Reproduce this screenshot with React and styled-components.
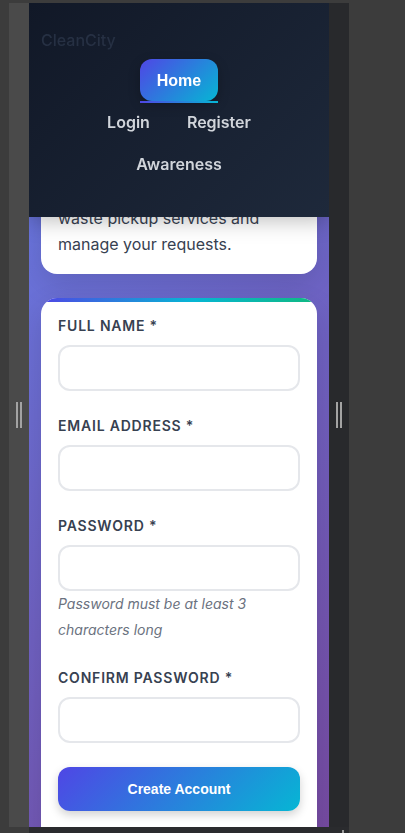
import React, { useLayoutEffect, useRef } from "react";
import styled, { createGlobalStyle } from "styled-components";

const Global = createGlobalStyle`
  html, body { margin: 0; padding: 0; background: #3c3c3c; }
  body { font-family: "Inter", "Noto Sans", sans-serif; }
  * { box-sizing: border-box; }
`;

const Screen = styled.div`
  width: 405px;
  height: 833px;
  overflow: hidden;
  background: #3c3c3c;
  padding: 3px 0 0 9px;
  display: flex;
  align-items: flex-start;
`;

const Rail = styled.div`
  width: 20px;
  height: 824px;
  flex: none;
  background: ${(p) => (p.$dark ? "#28292c" : "#4a4a4a")};
  display: flex;
  align-items: center;
  justify-content: center;
  gap: 2px;
`;

const Grip = styled.span`
  width: 2px;
  height: 26px;
  background: #a3a3a3;
`;

const Column = styled.div`
  width: 320px;
  display: flex;
  flex-direction: column;
`;

const DeviceRow = styled.div`
  display: flex;
`;

const BottomBar = styled.div`
  height: 6px;
  background: #2a2b2e;
  display: flex;
  justify-content: flex-end;
  align-items: flex-end;
  padding-right: 5px;
`;

const CornerMark = styled.span`
  width: 2px;
  height: 3px;
  background: #9a9a9a;
`;

const Viewport = styled.div`
  width: 300px;
  height: 824px;
  flex: none;
  background: linear-gradient(135deg, #667eea 0%, #764ba2 100%);
  overflow: hidden;
`;

const Scroller = styled.div`
  height: 100%;
  overflow: hidden;
`;

const Header = styled.header`
  position: sticky;
  top: 0;
  z-index: 10;
  height: 214px;
  padding: 24px 12px 32px;
  background: linear-gradient(135deg, #111827 0%, #1e293b 100%);
  box-shadow: 0 4px 20px rgba(0, 0, 0, 0.25);
  display: flex;
  flex-direction: column;
  gap: 6px;
`;

const Logo = styled.div`
  font-size: 16px;
  line-height: 26px;
  color: #263043;
  font-weight: 500;
`;

const Nav = styled.nav`
  display: flex;
  flex-direction: column;
  align-items: center;
`;

const NavRow = styled.div`
  display: flex;
  justify-content: center;
  gap: 5px;
  height: 42px;
  align-items: center;
`;

const ActiveButton = styled.button`
  position: relative;
  height: 42px;
  padding: 1px 17px 0;
  border: none;
  border-radius: 12px;
  background: linear-gradient(135deg, #4f46e5 0%, #06b6d4 100%);
  color: #ffffff;
  font-family: "Liberation Sans", Arial, sans-serif;
  font-weight: 700;
  font-size: 16px;
  box-shadow: 0 4px 12px rgba(0, 0, 0, 0.25);
  &::after {
    content: "";
    position: absolute;
    left: 0;
    right: 0;
    bottom: -2px;
    height: 2px;
    background: linear-gradient(90deg, #4f46e5, #06b6d4);
  }
`;

const NavLink = styled.a`
  padding: 0 16px;
  font-size: 16px;
  font-weight: 600;
  line-height: 24px;
  color: #d1d5db;
  text-decoration: none;
`;

const Main = styled.main`
  padding: 24px 12px 40px;
  display: flex;
  flex-direction: column;
  gap: 24px;
`;

const Card = styled.section`
  position: relative;
  overflow: hidden;
  background: #ffffff;
  border-radius: 16px;
  padding: ${(p) => (p.$form ? "18px 17px 24px" : "24px 17px 17px")};
  box-shadow: 0 10px 30px rgba(0, 0, 0, 0.12);
  ${(p) =>
    p.$form &&
    `
    &::before {
      content: "";
      position: absolute;
      top: 0;
      left: 0;
      right: 0;
      height: 4px;
      background: linear-gradient(90deg, #4f46e5 0%, #06b6d4 55%, #10b981 100%);
    }
  `}
`;

const Title = styled.h2`
  margin: 0 0 12px;
  font-size: 28px;
  line-height: 36px;
  font-weight: 700;
  color: #111827;
`;

const Lead = styled.p`
  margin: 0;
  font-size: 16px;
  line-height: 26px;
  color: #374151;
`;

const Field = styled.div`
  display: flex;
  flex-direction: column;
  margin-bottom: 25px;
`;

const Label = styled.label`
  font-size: 14px;
  line-height: 20px;
  font-weight: 600;
  letter-spacing: 0.8px;
  text-transform: uppercase;
  color: #374151;
  margin-bottom: 9px;
`;

const Input = styled.input`
  height: 46px;
  width: 100%;
  border: 2px solid #e5e7eb;
  border-radius: 12px;
  background: #ffffff;
  padding: 0 14px;
  font-family: "Inter", sans-serif;
  font-size: 16px;
  outline: none;
`;

const Hint = styled.small`
  font-size: 14px;
  line-height: 26px;
  font-style: italic;
  color: #6b7280;
`;

const Submit = styled.button`
  width: 100%;
  height: 44px;
  margin-top: -1px;
  border: none;
  border-radius: 12px;
  background: linear-gradient(135deg, #4f46e5 0%, #06b6d4 100%);
  color: #ffffff;
  font-family: "Liberation Sans", Arial, sans-serif;
  font-weight: 700;
  font-size: 14px;
  box-shadow: 0 4px 10px rgba(0, 0, 0, 0.18);
`;

const Footnote = styled.p`
  margin: 40px 0 0;
  text-align: center;
  font-size: 14px;
  color: #6b7280;
`;

const fields = [
  { id: "name", label: "Full Name *", type: "text" },
  { id: "email", label: "Email Address *", type: "email" },
  { id: "password", label: "Password *", type: "password", hint: "Password must be at least 3 characters long" },
  { id: "confirm", label: "Confirm Password *", type: "password" },
];

export default function App() {
  const scrollRef = useRef(null);
  const introRef = useRef(null);

  useLayoutEffect(() => {
    const s = scrollRef.current;
    const c = introRef.current;
    if (!s || !c) return;
    const d = c.getBoundingClientRect().bottom - s.getBoundingClientRect().top - 271;
    s.scrollTop += d;
  }, []);

  return (
    <>
      <Global />
      <Screen>
        <Rail>
          <Grip />
          <Grip />
        </Rail>
        <Column>
          <DeviceRow>
            <Viewport>
              <Scroller ref={scrollRef}>
                <Header>
                  <Logo>CleanCity</Logo>
                  <Nav>
                    <NavRow>
                      <ActiveButton>Home</ActiveButton>
                    </NavRow>
                    <NavRow>
                      <NavLink>Login</NavLink>
                      <NavLink>Register</NavLink>
                    </NavRow>
                    <NavRow>
                      <NavLink>Awareness</NavLink>
                    </NavRow>
                  </Nav>
                </Header>
                <Main>
                  <Card ref={introRef}>
                    <Title>Create Account</Title>
                    <Lead>Join our community to access waste pickup services and manage your requests.</Lead>
                  </Card>
                  <Card $form>
                    {fields.map((f) => (
                      <Field key={f.id}>
                        <Label htmlFor={f.id}>{f.label}</Label>
                        <Input id={f.id} type={f.type} />
                        {f.hint && <Hint>{f.hint}</Hint>}
                      </Field>
                    ))}
                    <Submit>Create Account</Submit>
                    <Footnote>Already have an account? Login</Footnote>
                  </Card>
                </Main>
              </Scroller>
            </Viewport>
            <Rail $dark>
              <Grip />
              <Grip />
            </Rail>
          </DeviceRow>
          <BottomBar>
            <CornerMark />
          </BottomBar>
        </Column>
      </Screen>
    </>
  );
}
